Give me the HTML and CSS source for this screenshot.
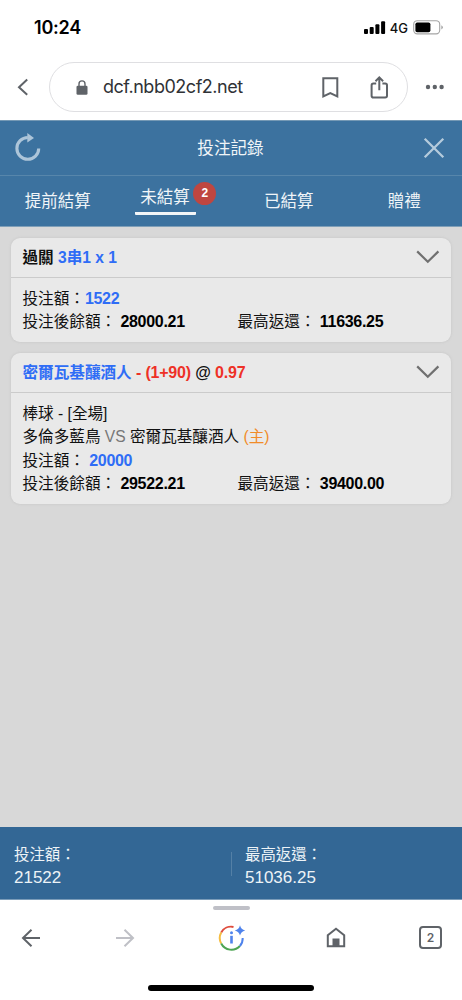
FILE: index.html
```html
<!DOCTYPE html>
<html lang="zh-Hant">
<head>
<meta charset="utf-8">
<meta name="viewport" content="width=device-width, initial-scale=1">
<title>投注記錄</title>
<link rel="stylesheet" href="styles.css">
</head>
<body>
<div class="phone">
  <header class="status">
    <span class="clock">10:24</span>
    <div class="status-right">
      <svg class="signal" width="22" height="14" viewBox="0 0 22 14"><rect x="0" y="8" width="4" height="5" rx="1"/><rect x="5.7" y="6" width="4" height="7" rx="1"/><rect x="11.4" y="3.3" width="4" height="9.7" rx="1"/><rect x="17.1" y="0.3" width="4" height="12.7" rx="1"/></svg>
      <span class="network">4G</span>
      <svg class="battery" width="31" height="15" viewBox="0 0 31 15"><rect x=".7" y=".7" width="26" height="13.2" rx="3.6" fill="none" stroke="#a5a5a5" stroke-width="1.1"/><rect x="2.4" y="2.4" width="15" height="9.8" rx="1.8"/><path d="M28.3 5.2q1.6.8 1.6 2.1t-1.6 2.1z" fill="#a5a5a5"/></svg>
    </div>
  </header>
  <nav class="address">
    <svg class="back" width="12" height="18" viewBox="0 0 12 18"><path d="M10.2 1.5 2 9.2l8.2 7.6"/></svg>
    <div class="pill">
      <svg class="lock" width="12" height="15" viewBox="0 0 12 15"><rect x=".5" y="5.7" width="11" height="9" rx="1.3"/><path d="M3 6V3.9a3 3 0 0 1 6 0V6" fill="none" stroke="#5f6368" stroke-width="1.4"/></svg>
      <span class="url">dcf.nbb02cf2.net</span>
      <svg class="bookmark" width="17" height="21" viewBox="0 0 17 21"><path d="M1.3 1.2h14v18.1L8.3 16l-7 3.3z"/></svg>
      <svg class="share" width="19" height="23" viewBox="0 0 19 23"><path d="M6.2 7.6H3.4a1.8 1.8 0 0 0-1.8 1.8v10.3a1.8 1.8 0 0 0 1.8 1.8h11.8a1.8 1.8 0 0 0 1.8-1.8V9.4a1.8 1.8 0 0 0-1.8-1.8h-2.8M9.3 14.2V1.9M5.5 5.2l3.8-3.8 3.8 3.8"/></svg>
    </div>
    <svg class="more" width="20" height="6" viewBox="0 0 20 6"><circle cx="3" cy="3" r="2.2"/><circle cx="9.8" cy="3" r="2.2"/><circle cx="16.6" cy="3" r="2.2"/></svg>
  </nav>
  <section class="title-bar">
    <svg width="28" height="30" viewBox="0 0 28 30"><path d="M13.8 4.5A10.9 10.9 0 1 0 24.7 15.4" fill="none" stroke="#adc5d9" stroke-width="3.1"/><path d="M13.3 0 20 5 13.3 9.6z" fill="#adc5d9"/></svg>
    <h1>投注記錄</h1>
    <svg width="22" height="22" viewBox="0 0 22 22"><path d="m1.7 1.7 18.6 18.6m0-18.6L1.7 20.3" stroke="#b5cbdc" stroke-width="2.3"/></svg>
  </section>
  <section class="tabs">
    <span class="tab">提前結算</span>
    <span class="tab active">未結算<b class="badge">2</b></span>
    <span class="tab">已結算</span>
    <span class="tab">贈禮</span>
  </section>
  <main class="bets">
    <article class="card">
      <div class="card-head">
        <h2>過關 <span class="blue">3串1 x 1</span></h2>
        <svg width="24" height="14" viewBox="0 0 24 14"><path d="m1.2 1.4 10.6 10.4L22.4 1.4"/></svg>
      </div>
      <div class="card-body">
        <p>投注額：<b class="blue">1522</b></p>
        <div class="pair"><p>投注後餘額： <b>28000.21</b></p><p>最高返還： <b>11636.25</b></p></div>
      </div>
    </article>
    <article class="card">
      <div class="card-head">
        <h2><span class="blue">密爾瓦基釀酒人</span> <span class="red odds">- (1+90)</span> <span class="odds">@</span> <span class="red odds">0.97</span></h2>
        <svg width="24" height="14" viewBox="0 0 24 14"><path d="m1.2 1.4 10.6 10.4L22.4 1.4"/></svg>
      </div>
      <div class="card-body">
        <p>棒球 - [全場]</p>
        <p>多倫多藍鳥 <span class="versus">VS</span> 密爾瓦基釀酒人 <span class="host">(主)</span></p>
        <p>投注額： <b class="blue">20000</b></p>
        <div class="pair"><p>投注後餘額： <b>29522.21</b></p><p>最高返還： <b>39400.00</b></p></div>
      </div>
    </article>
  </main>
  <section class="totals">
    <div class="total"><span>投注額：</span><span class="amount">21522</span></div>
    <div class="total"><span>最高返還：</span><span class="amount">51036.25</span></div>
  </section>
  <footer class="toolbar">
    <div class="handle"></div>
    <div class="actions">
      <svg width="20" height="20" viewBox="0 0 20 20" class="line"><path d="M19 10H2M10.5 1.7 2 10l8.5 8.3"/></svg>
      <svg width="20" height="20" viewBox="0 0 20 20" class="line pale"><path d="M1 10h17M9.5 1.7 18 10l-8.5 8.3"/></svg>
      <svg width="28" height="28" viewBox="0 0 28 28" class="lens">
        <path d="M3.2 8.5A11.5 11.5 0 0 1 15.5 2.9" stroke="#df4c3d"/><path d="M3.2 19.5a11.5 11.5 0 0 1 0-11" stroke="#f5bd42"/><path d="M3.2 19.5A11.5 11.5 0 0 0 21.9 22" stroke="#4da553"/><path d="M21.9 22a11.5 11.5 0 0 0 2.8-8" stroke="#4f83ec"/>
        <path d="M13.5 11.8v7.7" stroke="#4f83ec" stroke-width="2.6"/><circle cx="13.5" cy="8.7" r="1.5" fill="#4f83ec"/><path d="M22 1.2q1 4.2 5.2 5.2-4.2 1-5.2 5.2-1-4.2-5.2-5.2 4.2-1 5.2-5.2z" fill="#4f83ec"/>
      </svg>
      <svg width="20" height="21" viewBox="0 0 20 21"><path d="M1.8 19.2V8.2L10 1.7l8.2 6.5v11z" fill="none" stroke="#5f6368" stroke-width="2"/><path d="M6.5 11.5h7v8h-7z" fill="#5f6368"/></svg>
      <div class="tab-count">2</div>
    </div>
    <div class="home-indicator"></div>
  </footer>
</div>
</body>
</html>
```
FILE: styles.css
```css
* { box-sizing: border-box; }
body, h1, h2, p { margin: 0; }
body { background: #fff; }
svg { display: block; flex: none; }
.phone { width: 462px; height: 1000px; display: flex; flex-direction: column; overflow: hidden; font-family: "Liberation Sans", "Noto Sans CJK TC", sans-serif; color: #111; }

.status { height: 62px; padding: 0 18px 7px 34px; display: flex; align-items: center; justify-content: space-between; }
.clock { font: 600 18px/24px Inter, sans-serif; letter-spacing: -.2px; color: #000; padding-top: 1px; }
.status-right { display: flex; align-items: center; }
.network { margin: 0 5px 0 4px; font: 500 13px/18px Inter, sans-serif; }

.address { height: 58px; display: flex; align-items: flex-start; padding-left: 17px; }
.back { margin-top: 16px; fill: none; stroke: #5f6368; stroke-width: 2; }
.pill { width: 359px; height: 50px; margin-left: 20px; padding: 0 18px 0 26px; border: 1px solid #dfdfe2; border-radius: 25px; display: flex; align-items: center; }
.lock { fill: #5f6368; }
.url { margin-left: 15px; flex: 1; white-space: nowrap; font: 400 18px/24px Inter, sans-serif; letter-spacing: -.48px; color: #303236; }
.bookmark, .share { fill: none; stroke: #5f6368; stroke-width: 2; }
.share { margin-left: 31px; }
.more { margin: 22px 0 0 17px; fill: #5f6368; }

.title-bar { height: 56px; padding: 0 17px 0 14px; display: flex; align-items: center; justify-content: space-between; background: #3c729f; border-top: 1px solid #7599b5; border-bottom: 1px solid #5786ab; }
.title-bar h1 { font-size: 16.6px; font-weight: 400; line-height: 24px; color: #f0f5f8; margin-left: -4px; padding-top: 2px; }
.tabs { height: 51px; display: grid; grid-template-columns: repeat(4, 1fr); background: #3c729f; border-bottom: 1px solid #7f9fb8; }
.tab { justify-self: center; line-height: 24px; font-size: 16.5px; margin-top: 13px; color: #f0f5f8; white-space: nowrap; }
.tab.active { position: relative; margin-top: 9px; width: 61px; height: 30px; padding-left: 5px; margin-right: 15px; border-bottom: 3px solid #f3f6f8; border-radius: 1px; }
.badge { position: absolute; left: 58px; top: -3px; width: 23px; height: 23px; border-radius: 50%; background: #bf4640; color: #fff; font-size: 12px; line-height: 23px; text-align: center; }

.bets { flex: 1; padding: 11px 11px 0; display: flex; flex-direction: column; gap: 11px; background: #d8d8d8; }
.card { border-radius: 9px; background: #e9e9e9; box-shadow: 0 0 3px #c4c4c4; font-size: 15.6px; line-height: 23.4px; color: #111; }
.card-head { height: 40px; padding: 0 11px 0 11.5px; display: flex; align-items: center; justify-content: space-between; border-bottom: 1px solid #cbcbcb; }
.card-head h2 { font-size: 15.6px; font-weight: 700; white-space: nowrap; }
.card-head .odds { font-size: 16px; letter-spacing: -.2px; }
.card-head svg { fill: none; stroke: #707070; stroke-width: 2.2; margin-bottom: 1px; }
.card-body { padding: 9px 11px 8.2px 11.5px; }
.card-body p { height: 23.4px; white-space: nowrap; }
.card-body b { font-size: 16px; letter-spacing: -.3px; color: #000; }
.card-body b.blue { color: #2f6df6; }
.pair { display: grid; grid-template-columns: 215px 1fr; }
.blue { color: #2f6df6; }
.red { color: #ee3127; }
.versus { color: #777; }
.host { color: #f18c28; }

.totals { height: 73px; padding: 16px 0 0 14px; display: grid; grid-template-columns: 217px 1fr; background: #336795; border-bottom: 1px solid #7b9cb9; color: #edf3f7; }
.total { display: flex; flex-direction: column; font-size: 15.4px; line-height: 23px; }
.total + .total { padding-left: 14px; background: linear-gradient(#5480a6, #5480a6) 0 9px / 1px 24px no-repeat; }
.amount { font-size: 17px; }

.toolbar { height: 100px; display: flex; flex-direction: column; align-items: center; background: #fff; }
.handle { width: 37px; height: 4px; margin-top: 6px; border-radius: 2px; background: #bfc0c7; }
.actions { width: 420px; height: 55px; display: grid; grid-template-columns: 94px 103px 108px 93px 23px; align-items: center; }
.line { fill: none; stroke: #5f6368; stroke-width: 2; }
.pale { stroke: #bfc0c6; }
.lens { fill: none; stroke-width: 2; }
.tab-count { width: 23px; height: 23px; border: 2px solid #5f6368; border-radius: 4px; color: #5f6368; text-align: center; font: 600 12px/19px Inter, sans-serif; }
.home-indicator { width: 166px; height: 6px; margin-top: 20px; border-radius: 3px; background: #000; }
```
